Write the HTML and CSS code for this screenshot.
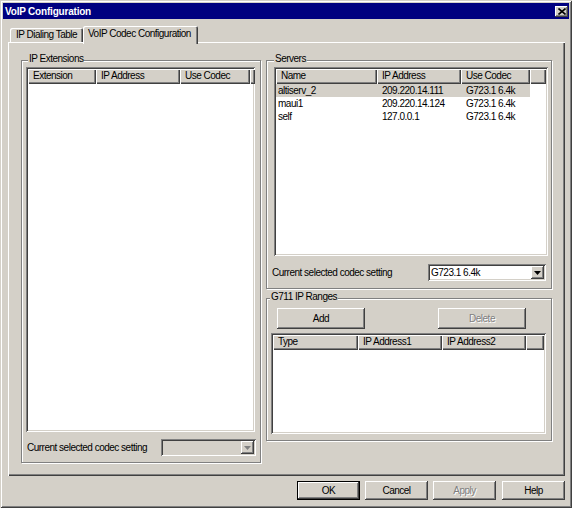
FILE: index.html
```html
<html>
<head>
    <title>VoIP Configuration</title>
    <link rel="stylesheet" href="styles.css">
</head>
<body>
<div class="window">
    <div class="titlebar">
        <span class="title">VoIP Configuration</span>
        <span class="close">
            <svg width="8" height="7" viewBox="0 0 8 7"><path d="M0.5 0.5 L7.5 6.5 M7.5 0.5 L0.5 6.5" stroke="#000" stroke-width="1.6" fill="none"/></svg>
        </span>
    </div>

    <div class="tabs">
        <div class="tab">IP Dialing Table</div>
        <div class="tab active">VoIP Codec Configuration</div>
    </div>

    <div class="panel">
        <div class="group ext">
            <span class="legend">IP Extensions</span>
            <div class="listview">
                <div class="lv-head">
                    <span class="c1">Extension</span>
                    <span class="c2">IP Address</span>
                    <span class="c3">Use Codec</span>
                    <span class="fill"></span>
                </div>
            </div>
            <div class="combo-row">
                <span>Current selected codec setting</span>
                <div class="combo disabled">
                    <span class="val"></span>
                    <span class="drop"><svg width="7" height="4" viewBox="0 0 7 4"><path d="M0 0 H7 L3.5 4 Z" fill="#808080"/></svg></span>
                </div>
            </div>
        </div>

        <div class="right-col">
            <div class="group srv">
                <span class="legend">Servers</span>
                <div class="listview">
                    <div class="lv-head">
                        <span class="c1">Name</span>
                        <span class="c2">IP Address</span>
                        <span class="c3">Use Codec</span>
                        <span class="fill"></span>
                    </div>
                    <div class="row sel">
                        <span class="c1">altiserv_2</span>
                        <span class="c2">209.220.14.111</span>
                        <span class="c3">G723.1 6.4k</span>
                    </div>
                    <div class="row">
                        <span class="c1">maui1</span>
                        <span class="c2">209.220.14.124</span>
                        <span class="c3">G723.1 6.4k</span>
                    </div>
                    <div class="row">
                        <span class="c1">self</span>
                        <span class="c2">127.0.0.1</span>
                        <span class="c3">G723.1 6.4k</span>
                    </div>
                </div>
                <div class="combo-row">
                    <span>Current selected codec setting</span>
                    <div class="combo">
                        <span class="val">G723.1 6.4k</span>
                        <span class="drop"><svg width="7" height="4" viewBox="0 0 7 4"><path d="M0 0 H7 L3.5 4 Z" fill="#000"/></svg></span>
                    </div>
                </div>
            </div>

            <div class="group g711">
                <span class="legend">G711 IP Ranges</span>
                <div class="btn-row">
                    <div class="button wide">Add</div>
                    <div class="button wide disabled">Delete</div>
                </div>
                <div class="listview">
                    <div class="lv-head">
                        <span class="c1">Type</span>
                        <span class="c2">IP Address1</span>
                        <span class="c3">IP Address2</span>
                        <span class="fill"></span>
                    </div>
                </div>
            </div>
        </div>
    </div>

    <div class="footer">
        <div class="button default">OK</div>
        <div class="button">Cancel</div>
        <div class="button disabled">Apply</div>
        <div class="button">Help</div>
    </div>
</div>
</body>
</html>
```

FILE: styles.css
```css
* { margin: 0; padding: 0; box-sizing: border-box; }
body { font: 10px "Liberation Sans", Arial, sans-serif; letter-spacing: -0.5px; color: #000; background: #d4d0c8; }

/* window frame */
.window {
    width: 572px; height: 508px; padding: 3px;
    background: #d4d0c8;
    display: flex; flex-direction: column;
    box-shadow: inset 1px 1px 0 #d4d0c8, inset -1px -1px 0 #404040, inset 2px 2px 0 #fff, inset -2px -2px 0 #808080;
}
.titlebar {
    height: 16px; background: #000080; color: #fff;
    display: flex; align-items: center; justify-content: space-between;
    padding: 0 1px 0 2px;
}
.title { font-weight: bold; letter-spacing: -0.2px; }
.close {
    width: 13px; height: 11px; background: #d4d0c8;
    display: flex; align-items: center; justify-content: center;
    box-shadow: inset -1px -1px 0 #404040, inset 1px 1px 0 #fff, inset -2px -2px 0 #808080;
}

/* tabs */
.tabs { display: flex; align-items: flex-end; height: 16px; margin-top: 7px; padding-left: 7px; }
.tab {
    width: 73px; height: 14px; line-height: 14px; padding-left: 6px;
    white-space: nowrap; border-radius: 2px 2px 0 0;
    box-shadow: inset 1px 1px 0 #fff, inset -1px 0 0 #404040, inset -2px 0 0 #808080;
}
.tab.active {
    width: 115px; height: 18px; line-height: 15px; padding-left: 5px;
    margin-bottom: -2px; position: relative; z-index: 1;
    background: #d4d0c8;
}

.panel {
    width: 557px; height: 434px; margin-left: 5px;
    padding: 18px 0 0 13px;
    display: grid; grid-template-columns: 240px 286px; column-gap: 5px; align-items: start;
    box-shadow: inset 1px 1px 0 #fff, inset -1px -1px 0 #404040, inset -2px -2px 0 #808080;
}
.right-col { display: flex; flex-direction: column; gap: 9px; }

/* etched group box */
.group {
    position: relative;
    border: 1px solid #808080;
    box-shadow: 1px 1px 0 #fff, inset 1px 1px 0 #fff;
}
.legend { position: absolute; top: -8px; left: 6px; padding: 0 1px; line-height: 12px; background: #d4d0c8; white-space: nowrap; }

.ext { height: 403px; padding: 6px 0 0 4px; }
.srv { height: 229px; padding: 6px 0 0 7px; }
.srv .legend { left: 7px; }
.g711 { height: 143px; padding: 9px 0 0 4px; }
.g711 .legend { left: 3px; }

/* list views */
.listview {
    background: #fff; padding: 2px; overflow: hidden;
    box-shadow: inset 1px 1px 0 #808080, inset -1px -1px 0 #fff, inset 2px 2px 0 #404040, inset -2px -2px 0 #d4d0c8;
}
.ext .listview { width: 229px; height: 365px; }
.srv .listview { width: 274px; height: 189px; }
.g711 .listview { width: 275px; height: 101px; margin-top: 4px; }

.lv-head { display: flex; height: 15px; }
.lv-head span {
    flex: none; height: 15px; line-height: 14px; padding-left: 5px;
    background: #d4d0c8; white-space: nowrap;
    box-shadow: inset 1px 1px 0 #fff, inset -1px -1px 0 #404040, inset -2px -2px 0 #808080;
}
.lv-head .fill { flex: 1; }

.row { display: flex; width: max-content; height: 13px; line-height: 13px; }
.row span { padding-left: 5px; white-space: nowrap; overflow: hidden; }
.row span:first-child { padding-left: 2px; }
.row.sel span { background: #d4d0c8; }

.ext .c1 { width: 68px; }
.ext .c2 { width: 84px; }
.ext .c3 { width: 70px; }
.srv .c1 { width: 101px; }
.srv .c2 { width: 84px; }
.srv .c3 { width: 69px; }
.g711 .c1 { width: 85px; }
.g711 .c2 { width: 84px; }
.g711 .c3 { width: 84px; }

/* combo boxes */
.combo-row { display: flex; align-items: center; justify-content: space-between; margin-top: 7px; height: 17px; }
.ext .combo-row { width: 230px; padding-left: 1px; }
.srv .combo-row { width: 274px; margin-left: -2px; margin-top: 8px; }
.combo {
    height: 17px; padding: 2px; background: #fff;
    display: flex; align-items: center;
    box-shadow: inset 1px 1px 0 #808080, inset -1px -1px 0 #fff, inset 2px 2px 0 #404040, inset -2px -2px 0 #d4d0c8;
}
.ext .combo { width: 95px; }
.srv .combo { width: 118px; }
.combo.disabled { background: #d4d0c8; }
.combo .val { flex: 1; padding-left: 1px; line-height: 13px; }
.drop {
    width: 13px; height: 13px; background: #d4d0c8;
    display: flex; align-items: center; justify-content: center;
    box-shadow: inset -1px -1px 0 #404040, inset 1px 1px 0 #fff, inset -2px -2px 0 #808080;
}

/* push buttons */
.btn-row { display: flex; justify-content: space-between; width: 255px; padding-left: 6px; }
.button {
    width: 63px; height: 19px; background: #d4d0c8;
    display: flex; align-items: center; justify-content: center;
    box-shadow: inset -1px -1px 0 #404040, inset 1px 1px 0 #fff, inset -2px -2px 0 #808080;
}
.button.wide { width: 88px; height: 21px; }
.button.default { border: 1px solid #000; }
.button.disabled { color: #808080; text-shadow: 1px 1px 0 #fff; }

.footer { display: flex; justify-content: flex-end; gap: 5px; margin-top: 5px; padding-right: 4px; }
.footer .button:last-child { margin-left: 1px; }
```
